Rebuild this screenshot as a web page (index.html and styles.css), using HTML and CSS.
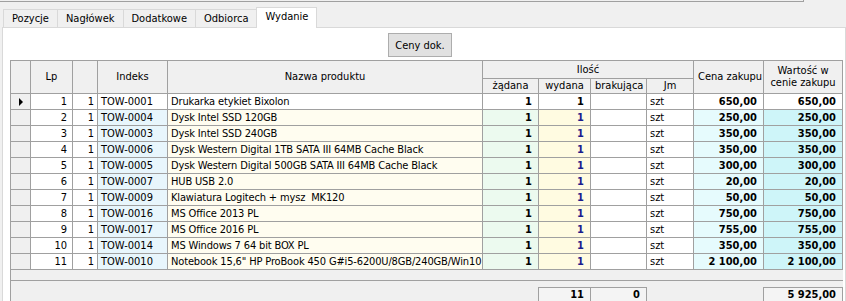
FILE: index.html
```html
<!DOCTYPE html>
<html lang="pl">
<head>
    <meta charset="UTF-8">
    <title>Wydanie</title>
    <link rel="stylesheet" href="styles.css">
</head>
<body>
    <div class="top-edge"></div>
    <div class="tabs">
        <div class="tab">Pozycje</div>
        <div class="tab">Nagłówek</div>
        <div class="tab">Dodatkowe</div>
        <div class="tab">Odbiorca</div>
        <div class="tab active">Wydanie</div>
    </div>
    <div class="page">
        <div class="toolbar">
            <button class="btn">Ceny dok.</button>
        </div>
        <div class="grid">
            <table class="items">
                <colgroup>
                    <col class="c-ind">
                    <col class="c-lp">
                    <col class="c-no">
                    <col class="c-idx">
                    <col class="c-name">
                    <col class="c-req">
                    <col class="c-out">
                    <col class="c-miss">
                    <col class="c-jm">
                    <col class="c-price">
                    <col class="c-value">
                </colgroup>
                <thead>
                    <tr class="head-a">
                        <th rowspan="2"></th>
                        <th rowspan="2">Lp</th>
                        <th rowspan="2"></th>
                        <th rowspan="2">Indeks</th>
                        <th rowspan="2">Nazwa produktu</th>
                        <th colspan="4">Ilość</th>
                        <th rowspan="2">Cena zakupu</th>
                        <th rowspan="2">Wartość w<br>cenie zakupu</th>
                    </tr>
                    <tr class="head-b">
                        <th>żądana</th>
                        <th>wydana</th>
                        <th>brakująca</th>
                        <th>Jm</th>
                    </tr>
                </thead>
                <tbody>
                    <tr class="current">
                        <td><span class="pointer"></span></td>
                        <td>1</td><td>1</td><td>TOW-0001</td><td>Drukarka etykiet Bixolon</td>
                        <td>1</td><td>1</td><td></td><td>szt</td><td>650,00</td><td>650,00</td>
                    </tr>
                    <tr>
                        <td></td>
                        <td>2</td><td>1</td><td>TOW-0004</td><td>Dysk Intel SSD 120GB</td>
                        <td>1</td><td>1</td><td></td><td>szt</td><td>250,00</td><td>250,00</td>
                    </tr>
                    <tr>
                        <td></td>
                        <td>3</td><td>1</td><td>TOW-0003</td><td>Dysk Intel SSD 240GB</td>
                        <td>1</td><td>1</td><td></td><td>szt</td><td>350,00</td><td>350,00</td>
                    </tr>
                    <tr>
                        <td></td>
                        <td>4</td><td>1</td><td>TOW-0006</td><td>Dysk Western Digital 1TB SATA III 64MB Cache Black</td>
                        <td>1</td><td>1</td><td></td><td>szt</td><td>350,00</td><td>350,00</td>
                    </tr>
                    <tr>
                        <td></td>
                        <td>5</td><td>1</td><td>TOW-0005</td><td>Dysk Western Digital 500GB SATA III 64MB Cache Black</td>
                        <td>1</td><td>1</td><td></td><td>szt</td><td>300,00</td><td>300,00</td>
                    </tr>
                    <tr>
                        <td></td>
                        <td>6</td><td>1</td><td>TOW-0007</td><td>HUB USB 2.0</td>
                        <td>1</td><td>1</td><td></td><td>szt</td><td>20,00</td><td>20,00</td>
                    </tr>
                    <tr>
                        <td></td>
                        <td>7</td><td>1</td><td>TOW-0009</td><td>Klawiatura Logitech + mysz &nbsp;MK120</td>
                        <td>1</td><td>1</td><td></td><td>szt</td><td>50,00</td><td>50,00</td>
                    </tr>
                    <tr>
                        <td></td>
                        <td>8</td><td>1</td><td>TOW-0016</td><td>MS Office 2013 PL</td>
                        <td>1</td><td>1</td><td></td><td>szt</td><td>750,00</td><td>750,00</td>
                    </tr>
                    <tr>
                        <td></td>
                        <td>9</td><td>1</td><td>TOW-0017</td><td>MS Office 2016 PL</td>
                        <td>1</td><td>1</td><td></td><td>szt</td><td>755,00</td><td>755,00</td>
                    </tr>
                    <tr>
                        <td></td>
                        <td>10</td><td>1</td><td>TOW-0014</td><td>MS Windows 7 64 bit BOX PL</td>
                        <td>1</td><td>1</td><td></td><td>szt</td><td>350,00</td><td>350,00</td>
                    </tr>
                    <tr>
                        <td></td>
                        <td>11</td><td>1</td><td>TOW-0010</td><td>Notebook 15,6" HP ProBook 450 G#i5-6200U/8GB/240GB/Win10</td>
                        <td>1</td><td>1</td><td></td><td>szt</td><td>2 100,00</td><td>2 100,00</td>
                    </tr>
                </tbody>
            </table>
            <div class="grid-empty"></div>
            <div class="grid-footer">
                <div class="total sum-out">11</div>
                <div class="total sum-miss">0</div>
                <div class="total sum-value">5 925,00</div>
            </div>
        </div>
    </div>
</body>
</html>
```

FILE: styles.css
```css
body {
    margin: 0;
    height: 301px;
    overflow: hidden;
    background-color: #f0f0f0;
    font-family: "DejaVu Sans Condensed", "Liberation Sans", sans-serif;
    font-size: 11px;
    color: #000;
}

.top-edge {
    width: 803px;
    height: 1px;
    border-bottom: 1px solid #a0a0a0;
    border-right: 1px solid #a0a0a0;
}

/* tab strip */
.tabs {
    display: flex;
    align-items: flex-end;
    height: 25px;
    padding-left: 3px;
}

.tab {
    height: 17px;
    line-height: 17px;
    padding: 0 8px;
    border: 1px solid #d9d9d9;
    border-right: none;
    border-bottom: none;
    background-color: #f0f0f0;
}

.tab.active {
    position: relative;
    z-index: 1;
    height: 20px;
    line-height: 18px;
    margin-bottom: -1px;
    border-right: 1px solid #d9d9d9;
    background-color: #fff;
}

.page {
    height: 300px;
    margin-left: 2px;
    background-color: #fff;
    border: 1px solid #d9d9d9;
}

.toolbar {
    box-sizing: border-box;
    height: 32px;
    padding: 5px 0 0 385px;
}

.btn {
    width: 64px;
    height: 24px;
    padding: 0;
    border: 1px solid #adadad;
    background-color: #e1e1e1;
    font: inherit;
    color: #000;
}

/* grid */
.grid {
    width: 832px;
    margin-left: 7px;
    border-left: 1px solid #a0a0a0;
    background-color: #f0f0f0;
}

.items {
    width: 832px;
    table-layout: fixed;
    border-collapse: separate;
    border-spacing: 0;
    border-top: 1px solid #a0a0a0;
    background-color: #fff;
}

.c-ind { width: 20px; }
.c-lp { width: 42px; }
.c-no { width: 25px; }
.c-idx { width: 70px; background-color: #e8f6fc; }
.c-name { width: 315px; background-color: #fffdf0; }
.c-req { width: 56px; background-color: #ecfaef; }
.c-out { width: 52px; background-color: #fffbe1; }
.c-miss { width: 56px; }
.c-jm { width: 47px; }
.c-price { width: 70px; background-color: #e6fbfd; }
.c-value { width: 79px; background-color: #cef5f9; }

.items th,
.items td {
    padding: 0 4px;
    border-right: 1px solid #a0a0a0;
    border-bottom: 1px solid #a0a0a0;
    white-space: nowrap;
    overflow: hidden;
}

.items th {
    background-color: #f0f0f0;
    font-weight: normal;
    line-height: 12px;
    text-align: center;
}

.head-a { height: 18px; }
.head-b { height: 15px; }

.items tbody tr {
    height: 16px;
}

.items td {
    line-height: 15px;
    padding: 0 3px;
}

.items tbody tr.current {
    background-color: #fff;
}

.items td:nth-child(1) {
    background-color: #f0f0f0;
    padding: 0;
    text-align: center;
}

.items td:nth-child(2) { text-align: right; padding-right: 5px; }
.items td:nth-child(3) { text-align: right; }
.items td:nth-child(5) { letter-spacing: -0.15px; }

.items td:nth-child(6),
.items td:nth-child(7) {
    text-align: right;
    font-weight: bold;
    padding-right: 6px;
}

.items td:nth-child(7) {
    color: #1c1c8c;
}

.items tr.current td:nth-child(7) {
    color: #000;
}

.items td:nth-child(10),
.items td:nth-child(11) {
    text-align: right;
    font-weight: bold;
    padding-right: 6px;
}

.pointer {
    display: inline-block;
    border-left: 4px solid #000;
    border-top: 4px solid transparent;
    border-bottom: 4px solid transparent;
    vertical-align: middle;
}

.grid-empty {
    height: 10px;
}

.grid-footer {
    display: grid;
    grid-template-columns: 20px 42px 25px 70px 315px 56px 52px 56px 47px 70px 79px;
    height: 14px;
    padding-top: 6px;
    border-top: 1px solid #a0a0a0;
}

.total {
    margin-left: -1px;
    padding-right: 6px;
    border: 1px solid #a0a0a0;
    background-color: #f4f4f4;
    font-weight: bold;
    line-height: 14px;
    text-align: right;
}

.sum-out { grid-column: 7; }
.sum-miss { grid-column: 8; }
.sum-value { grid-column: 11; }
```
